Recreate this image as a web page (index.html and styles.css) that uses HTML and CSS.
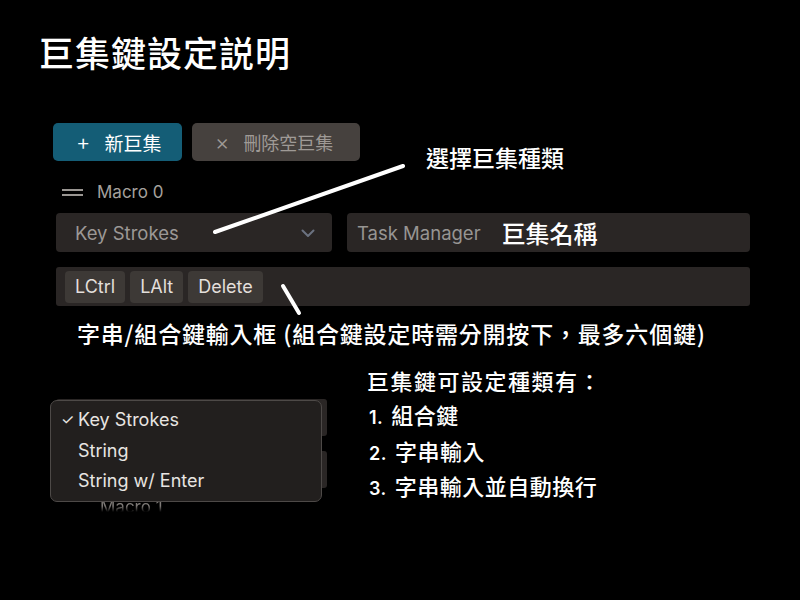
FILE: index.html
```html
<!DOCTYPE html>
<html lang="zh-Hant">
<head>
<meta charset="utf-8">
<title>巨集鍵設定説明</title>
<link rel="stylesheet" href="styles.css">
</head>
<body>
<div class="page">
  <h1 class="title">巨集鍵設定説明</h1>

  <div class="toolbar">
    <button class="btn btn-primary"><span class="btn-icon">+</span>新巨集</button>
    <button class="btn btn-muted"><span class="btn-icon">×</span>刪除空巨集</button>
  </div>

  <div class="macro-head">
    <span class="handle"><i></i><i></i></span>
    <span class="macro-name">Macro 0</span>
  </div>

  <div class="row-fields">
    <div class="field select">
      <span>Key Strokes</span>
      <svg class="chev" width="14" height="9" viewBox="0 0 14 9"><path d="M1.5 1.5 L7 7 L12.5 1.5" fill="none" stroke="#6b7280" stroke-width="2" stroke-linecap="round" stroke-linejoin="round"/></svg>
    </div>
    <div class="field name">
      <span class="name-value">Task Manager</span>
      <span class="note note-inline">巨集名稱</span>
    </div>
  </div>

  <div class="keys">
    <span class="chip">LCtrl</span>
    <span class="chip">LAlt</span>
    <span class="chip">Delete</span>
  </div>

  <p class="note caption">字串/組合鍵輸入框 (組合鍵設定時需分開按下，最多六個鍵)</p>

  <div class="lower">
    <div class="ghost-stack">
      <div class="ghost-box"></div>
      <div class="ghost-box"></div>
      <div class="ghost-label">Macro 1</div>
      <ul class="menu">
        <li class="menu-item checked"><span class="check">✓</span>Key Strokes</li>
        <li class="menu-item">String</li>
        <li class="menu-item">String w/ Enter</li>
      </ul>
    </div>
    <div class="types note">
      <div class="types-title">巨集鍵可設定種類有：</div>
      <ol class="types-list">
        <li><span class="num">1.</span>組合鍵</li>
        <li><span class="num">2.</span>字串輸入</li>
        <li><span class="num">3.</span>字串輸入並自動換行</li>
      </ol>
    </div>
  </div>

  <div class="note floating-note">選擇巨集種類</div>

  <svg class="arrows" width="800" height="600" viewBox="0 0 800 600">
    <line x1="215" y1="232" x2="403" y2="166" stroke="#fff" stroke-width="4" stroke-linecap="round"/>
    <line x1="283" y1="286" x2="299" y2="313" stroke="#fff" stroke-width="4" stroke-linecap="round"/>
  </svg>
</div>
</body>
</html>
```

FILE: styles.css
```css
* { box-sizing: border-box; }
html, body {
  margin: 0;
  padding: 0;
  background: #000;
}
body {
  width: 800px;
  height: 600px;
  overflow: hidden;
  font-family: "Inter", "Noto Sans CJK TC", sans-serif;
  color: #fff;
}
.page {
  position: relative;
  width: 800px;
  height: 600px;
  padding: 0 50px 0 56px;
}
.title {
  margin: 0;
  padding-top: 31px;
  margin-left: -17px;
  font-family: "Noto Sans CJK TC", sans-serif;
  font-size: 35px;
  font-weight: 500;
  line-height: 42px;
  letter-spacing: 1px;
}
.toolbar {
  display: flex;
  gap: 10px;
  margin-top: 50px;
  margin-left: -3px;
}
.btn {
  display: flex;
  align-items: center;
  height: 38px;
  border: none;
  border-radius: 5px;
  font-family: "Noto Sans CJK TC", sans-serif;
  font-size: 19px;
  padding: 0;
}
.btn-icon {
  font-family: "Inter", sans-serif;
  font-size: 22px;
  font-weight: 300;
  line-height: 1;
  margin-right: 14px;
}
.btn-primary {
  width: 129px;
  background: #145d76;
  color: #fff;
  padding-left: 23px;
}
.btn-muted {
  width: 168px;
  background: #46413e;
  color: #9f9a96;
  padding-left: 23px;
  font-size: 18px;
}
.macro-head {
  display: flex;
  align-items: center;
  height: 24px;
  margin-top: 19px;
  margin-left: 6px;
}
.handle {
  display: flex;
  flex-direction: column;
  gap: 3px;
  width: 21px;
  margin-right: 14px;
}
.handle i {
  display: block;
  height: 2px;
  background: #9a9692;
}
.macro-name {
  font-size: 17px;
  color: #a5a19d;
}
.row-fields {
  display: flex;
  gap: 15px;
  margin-top: 9px;
}
.field {
  display: flex;
  align-items: center;
  height: 39px;
  background: #2a2625;
  border-radius: 4px;
  font-size: 18.5px;
}
.select {
  width: 276px;
  padding: 0 17px 0 19px;
  justify-content: space-between;
  color: #9c9896;
}
.chev { margin-top: 2px; }
.name {
  width: 403px;
  padding-left: 10px;
  color: #979593;
}
.name-value { margin-right: 21px; }
.note {
  font-family: "Noto Sans CJK TC", sans-serif;
  font-weight: 500;
  color: #fff;
}
.note-inline {
  font-size: 24px;
}
.keys {
  display: flex;
  align-items: center;
  gap: 5px;
  width: 694px;
  height: 39px;
  margin-top: 15px;
  padding-left: 9px;
  background: #2a2625;
  border-radius: 3px;
}
.chip {
  display: flex;
  align-items: center;
  height: 32px;
  padding: 0 10px;
  background: #3d3936;
  border-radius: 4px;
  font-size: 18px;
  color: #e3dfdb;
}
.caption {
  margin: 12px 0 0 21px;
  font-size: 23px;
  line-height: 30px;
  letter-spacing: 0.8px;
  white-space: nowrap;
}
.lower {
  display: flex;
  margin-top: 17px;
}
.ghost-stack {
  position: relative;
  width: 271px;
  margin-top: 34px;
}
.ghost-box {
  height: 37px;
  background: #2a2625;
  border-radius: 3px;
  margin-bottom: 15px;
}
.ghost-label {
  margin-top: -6px;
  padding-left: 44px;
  font-size: 17px;
  line-height: 20px;
  color: #7d7976;
  -webkit-mask-image: linear-gradient(to bottom, #000 45%, transparent 75%);
  mask-image: linear-gradient(to bottom, #000 45%, transparent 75%);
}
.menu {
  position: absolute;
  left: -6px;
  top: 1px;
  width: 272px;
  height: 102px;
  margin: 0;
  padding: 4px 0 0;
  list-style: none;
  background: #221f1e;
  border: 1px solid #4d4947;
  border-radius: 7px;
}
.menu-item {
  position: relative;
  height: 30.5px;
  line-height: 30px;
  padding-left: 27px;
  font-size: 18px;
  color: #e8e5e2;
}
.check {
  position: absolute;
  left: 10px;
  top: 0;
  font-size: 15px;
}
.types {
  margin-left: 40px;
  font-size: 22px;
}
.types-title {
  line-height: 30px;
  letter-spacing: 1.5px;
}
.types-list {
  list-style: none;
  margin: 2px 0 0;
  padding: 0 0 0 2px;
}
.types-list li {
  height: 35.5px;
  line-height: 35px;
  letter-spacing: 0.5px;
}
.num {
  font-family: "Inter", sans-serif;
  font-size: 18px;
  font-weight: 600;
  margin-right: 8px;
}
.floating-note {
  position: absolute;
  left: 426px;
  top: 141px;
  font-size: 23px;
  line-height: 32px;
}
.arrows {
  position: absolute;
  left: 0;
  top: 0;
  pointer-events: none;
}
```
